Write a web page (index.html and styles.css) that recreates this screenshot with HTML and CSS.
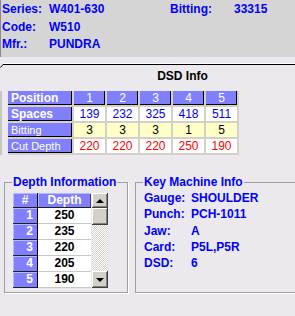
FILE: index.html
```html
<!DOCTYPE html>
<html lang="en">
<head>
    <meta charset="UTF-8">
    <title>Key Info</title>
    <link rel="stylesheet" href="styles.css">
</head>
<body>
    <div class="keyhead">
        <span>Series:</span><span>W401-630</span><span>Bitting:</span><span>33315</span>
        <span>Code:</span><span>W510</span><span></span><span></span>
        <span>Mfr.:</span><span>PUNDRA</span><span></span><span></span>
    </div>

    <svg class="tabline" width="295" height="5" viewBox="0 0 295 5">
        <path d="M3 0.5 H295" stroke="#ffffff" stroke-width="1" fill="none"/>
        <path d="M0.5 4.5 L3 1.5 H295" stroke="#000000" stroke-width="1" fill="none"/>
    </svg>

    <h2 class="dsd-title">DSD Info</h2>

    <div class="dsd-row">
        <div class="dsd-grid">
            <div class="hd lab b">Position</div>
            <div class="hd">1</div>
            <div class="hd">2</div>
            <div class="hd">3</div>
            <div class="hd">4</div>
            <div class="hd">5</div>

            <div class="hd lab b">Spaces</div>
            <div class="sp">139</div>
            <div class="sp">232</div>
            <div class="sp">325</div>
            <div class="sp">418</div>
            <div class="sp">511</div>

            <div class="hd lab">Bitting</div>
            <div class="bt">3</div>
            <div class="bt">3</div>
            <div class="bt">3</div>
            <div class="bt">1</div>
            <div class="bt">5</div>

            <div class="hd lab">Cut Depth</div>
            <div class="cd">220</div>
            <div class="cd">220</div>
            <div class="cd">220</div>
            <div class="cd">250</div>
            <div class="cd">190</div>
        </div>
    </div>

    <div class="lower">
        <fieldset class="grp depth">
            <legend>Depth Information</legend>
            <div class="depth-box">
                <div class="depth-grid">
                    <div class="num head">#</div>
                    <div class="dep head">Depth</div>
                    <div class="num">1</div><div class="dep">250</div>
                    <div class="num">2</div><div class="dep">235</div>
                    <div class="num">3</div><div class="dep">220</div>
                    <div class="num">4</div><div class="dep">205</div>
                    <div class="num">5</div><div class="dep">190</div>
                </div>
                <div class="scroll">
                    <div class="sbtn up"><span class="arrow-up"></span></div>
                    <div class="sbtn thumb"></div>
                    <div class="track"></div>
                    <div class="sbtn down"><span class="arrow-down"></span></div>
                </div>
            </div>
        </fieldset>

        <fieldset class="grp machine">
            <legend>Key Machine Info</legend>
            <div class="machine-grid">
                <span>Gauge:</span><span>SHOULDER</span>
                <span>Punch:</span><span>PCH-1011</span>
                <span>Jaw:</span><span>A</span>
                <span>Card:</span><span>P5L,P5R</span>
                <span>DSD:</span><span>6</span>
            </div>
        </fieldset>
    </div>
</body>
</html>
```

FILE: styles.css
```css
body {
    margin: 0;
    width: 295px;
    height: 316px;
    overflow: hidden;
    background: #ebe9ee;
    font: bold 12px "Liberation Sans", Arial, sans-serif;
}

.keyhead {
    display: grid;
    grid-template-columns: 47px 121px 64px auto;
    grid-template-rows: 18px 17px 17px;
    align-items: center;
    height: 57px;
    box-sizing: border-box;
    padding-left: 1px;
    background: #d5d5d5;
    border-left: 1px solid #8a8a8a;
    color: #0000ff;
}

.tabline {
    display: block;
    margin-top: 6px;
}

.dsd-title {
    margin: 0;
    font-size: 12px;
    line-height: 16px;
    text-align: center;
    padding-left: 70px;
    color: #000;
}

.dsd-row {
    display: flex;
    margin-top: 7px;
    border-left: 2px solid #c6c6c6;
    padding-left: 6px;
}

.dsd-grid {
    display: grid;
    grid-template-columns: 64px repeat(5, 31px);
    grid-auto-rows: 14px;
    gap: 2px;
    padding: 0 2px 2px 0;
    background: #d4d0c8;
}

.dsd-grid > div {
    line-height: 14px;
    font-size: 12px;
    font-weight: normal;
    text-align: center;
}

.hd {
    background: #8080ff;
    color: #fff;
    box-shadow: inset -1px -1px 0 #000;
}

.dsd-grid > .lab {
    text-align: left;
    padding-left: 3px;
    font-size: 11px;
}

.dsd-grid > .lab.b {
    font-weight: bold;
    font-size: 12px;
}

.sp {
    background: #fff;
    color: #0000ff;
}

.bt {
    background: #ffffc8;
    color: #000;
}

.cd {
    background: #fff;
    color: #ff0000;
}

.lower {
    display: flex;
    gap: 7px;
    margin-top: 20px;
    padding-left: 4px;
}

.grp {
    margin: 0;
    min-width: 0;
    height: 118px;
    box-sizing: border-box;
    border: 1px solid #a0a0a0;
    box-shadow: 1px 1px 0 #fff;
    padding: 4px 8px 3px;
}

.grp legend {
    padding: 0 1px;
    margin-left: -1px;
    line-height: 14px;
    white-space: nowrap;
    color: #0000ff;
}

.depth {
    flex: 0 0 124px;
}

.machine {
    flex: 0 0 160px;
    padding-top: 1px;
    border-right: none;
}

.depth-box {
    display: flex;
}

.depth-grid {
    display: grid;
    grid-template-columns: 25px 53px;
    grid-template-rows: 15px repeat(5, 16px);
}

.depth-grid > div {
    box-sizing: border-box;
    line-height: 15px;
}

.num {
    background: #8080ff;
    color: #fff;
    text-align: right;
    padding-right: 4px;
    border-right: 1px solid #000;
    border-bottom: 1px solid #202020;
    box-shadow: inset 1px 1px 0 #b8b8ff;
}

.dep {
    background: #fff;
    color: #000;
    text-align: center;
    border-bottom: 1px solid #c8c8c8;
}

.depth-grid > .head {
    color: #fff;
    background: #8080ff;
    text-align: center;
    padding-right: 0;
    line-height: 14px;
    border-bottom: 1px solid #202020;
}

.dep.head {
    box-shadow: inset 1px 1px 0 #b8b8ff, inset -1px 0 0 #404040;
}

.scroll {
    display: flex;
    flex-direction: column;
    width: 16px;
    margin-left: 1px;
}

.sbtn {
    display: flex;
    align-items: center;
    justify-content: center;
    background: #d4d0c8;
    box-shadow: inset -1px -1px 0 #404040, inset 1px 1px 0 #fff, inset -2px -2px 0 #808080;
}

.up {
    height: 15px;
}

.thumb {
    height: 17px;
}

.down {
    height: 17px;
}

.track {
    height: 46px;
    background: repeating-conic-gradient(#ffffff 0 25%, #d4d0c8 0 50%) 0 0 / 2px 2px;
}

.arrow-up {
    width: 0;
    height: 0;
    border-left: 4px solid transparent;
    border-right: 4px solid transparent;
    border-bottom: 4px solid #000;
}

.arrow-down {
    width: 0;
    height: 0;
    border-left: 4px solid transparent;
    border-right: 4px solid transparent;
    border-top: 4px solid #000;
}

.machine-grid {
    display: grid;
    grid-template-columns: 47px auto;
    grid-auto-rows: 16.25px;
    align-items: center;
    color: #0000ff;
}
```
